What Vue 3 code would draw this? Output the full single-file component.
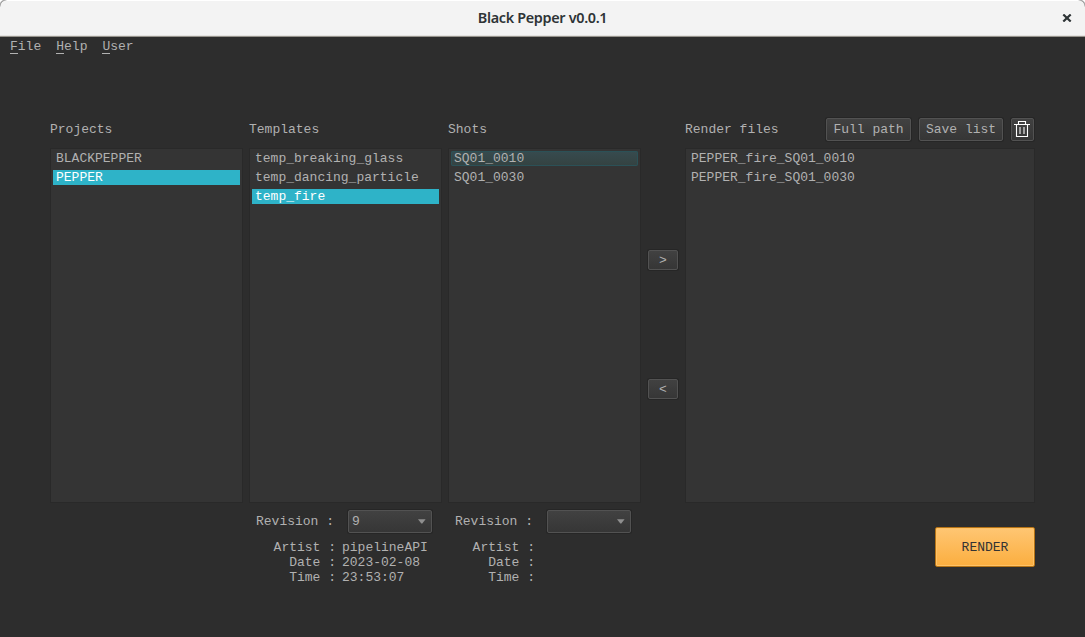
<script setup>
const menus = ['File', 'Help', 'User']
const columns = [
  {
    title: 'Projects',
    items: [{ name: 'BLACKPEPPER' }, { name: 'PEPPER', state: 'selected' }],
  },
  {
    title: 'Templates',
    items: [
      { name: 'temp_breaking_glass' },
      { name: 'temp_dancing_particle' },
      { name: 'temp_fire', state: 'selected' },
    ],
    revision: '9',
    info: { Artist: 'pipelineAPI', Date: '2023-02-08', Time: '23:53:07' },
  },
  {
    title: 'Shots',
    items: [{ name: 'SQ01_0010', state: 'hovered' }, { name: 'SQ01_0030' }],
    revision: '',
    info: { Artist: '', Date: '', Time: '' },
  },
]
const renderFiles = ['PEPPER_fire_SQ01_0010', 'PEPPER_fire_SQ01_0030']
</script>

<template>
  <div class="window">
    <header class="titlebar">
      <h1>Black Pepper v0.0.1</h1>
      <svg class="close" width="10" height="8" viewBox="0 0 10 8">
        <path d="M1.3 .5 8.7 7.5M8.7 .5 1.3 7.5" fill="none" stroke="#2e3436" stroke-width="2.2" />
      </svg>
    </header>

    <nav class="menubar">
      <span v-for="m in menus" :key="m"><i>{{ m[0] }}</i>{{ m.slice(1) }}</span>
    </nav>

    <main class="content">
      <section v-for="c in columns" :key="c.title" class="column">
        <div class="heading">{{ c.title }}</div>
        <ul class="list">
          <li v-for="i in c.items" :key="i.name" :class="i.state">{{ i.name }}</li>
        </ul>
        <div v-if="c.info" class="details">
          <div class="revision">
            <span>Revision :</span>
            <div class="combo">
              <span>{{ c.revision }}</span>
              <svg width="8" height="5" viewBox="0 0 8 5">
                <path d="M0 .2H7.6L4.3 4.4H3.3Z" fill="#8f8f8f" />
              </svg>
            </div>
          </div>
          <div v-for="(value, key) in c.info" :key="key" class="info">
            <span class="key">{{ key }} :</span><span>{{ value }}</span>
          </div>
        </div>
      </section>

      <div class="transfer">
        <button class="btn arrow">&gt;</button>
        <button class="btn arrow">&lt;</button>
      </div>

      <section class="column">
        <div class="heading">
          <span class="grow">Render files</span>
          <button class="btn full">Full path</button>
          <button class="btn save">Save list</button>
          <button class="btn trash" aria-label="Clear">
            <svg width="16" height="17" viewBox="0 0 16 17" fill="none" stroke="#fff">
              <path d="M0 3.5H16M4.5 3.5V.5H11.5V3.5M2.5 4V15.5H13.5V4" stroke-width="1.1" />
              <path d="M6 6V13M10 6V13" stroke="#bbb" stroke-width="1.6" />
            </svg>
          </button>
        </div>
        <ul class="list">
          <li v-for="f in renderFiles" :key="f">{{ f }}</li>
        </ul>
        <button class="render">RENDER</button>
      </section>
    </main>
  </div>
</template>

<style>
body {
  margin: 0;
  background: #fff;
}
</style>

<style scoped>
* {
  box-sizing: border-box;
}
.window {
  width: 1085px;
  height: 637px;
  overflow: hidden;
  border-radius: 7px 7px 0 0;
  background: #2d2d2d;
  color: #b1b1b1;
  font: 13px/15px 'Liberation Mono', monospace;
  box-shadow: 0 0 0 1px #aaa;
}
.titlebar {
  position: relative;
  height: 37px;
  display: flex;
  align-items: center;
  justify-content: center;
  padding-bottom: 2px;
  background: linear-gradient(#fff 0 1px, #f3f3f3 1px 35px, #e4e3e1 35px 36px, #96938c 36px);
}
h1 {
  margin: 0;
  color: #2e3436;
  font: 600 14.4px/20px 'Noto Sans', sans-serif;
  letter-spacing: -0.32px;
}
.close {
  position: absolute;
  right: 13px;
  top: 14px;
}
.menubar {
  display: flex;
  gap: 15px;
  padding: 2px 10px 0;
  height: 29px;
}
.menubar i {
  display: inline-block;
  height: 15px;
  font-style: normal;
  border-bottom: 1px solid #b1b1b1;
}
.content {
  display: grid;
  grid-template-columns: 193px 193px 193px 32px 350px;
  column-gap: 6px;
  padding: 45px 50px 0;
}
.heading {
  height: 37px;
  display: flex;
  align-items: center;
  padding-right: 1px;
}
.grow {
  flex: 1;
}
.list {
  height: 355px;
  margin: 0;
  padding: 2px;
  list-style: none;
  background: #343434;
  border: 1px solid #292929;
}
.list li {
  height: 15px;
  margin-bottom: 4px;
  padding-left: 3px;
}
.list .selected {
  background: #2eb3c8;
  color: #fff;
}
.list .hovered {
  border-radius: 2px;
  background: linear-gradient(#374b4f, #344241);
  box-shadow: inset 0 0 0 1px #2b5157;
}
.btn {
  height: 23px;
  padding: 0;
  border: 1px solid #525252;
  border-radius: 2px;
  background: linear-gradient(#414141, #363636);
  box-shadow: 0 0 0 1px #262626;
  color: #b1b1b1;
  font: inherit;
}
.full {
  width: 85px;
}
.save {
  width: 84px;
  margin: 0 8px;
}
.trash {
  width: 23px;
  display: flex;
  align-items: center;
  justify-content: center;
  padding: 0 3px 0 2px;
}
.transfer {
  display: flex;
  flex-direction: column;
  align-items: center;
  gap: 109px;
  padding-top: 139px;
}
.arrow {
  width: 30px;
  height: 20px;
}
.details {
  padding-top: 7px;
}
.revision {
  display: flex;
  align-items: center;
  justify-content: space-between;
  padding: 0 10px 0 7px;
  margin-bottom: 7px;
}
.combo {
  width: 84px;
  height: 23px;
  display: flex;
  align-items: center;
  justify-content: space-between;
  padding: 0 5px 0 3px;
  border: 1px solid #525252;
  border-radius: 2px;
  background: linear-gradient(#414141, #363636);
  box-shadow: 0 0 0 1px #262626;
}
.info {
  display: flex;
  gap: 6px;
}
.key {
  width: 87px;
  text-align: right;
}
.render {
  display: block;
  width: 100px;
  height: 40px;
  margin: 24px 0 0 auto;
  padding: 0;
  border: 1px solid #b57316;
  border-radius: 2px;
  background: linear-gradient(#ffc673, #fbae3f);
  box-shadow: inset 0 0 0 1px #ffc266;
  color: #333;
  font: inherit;
}
</style>
